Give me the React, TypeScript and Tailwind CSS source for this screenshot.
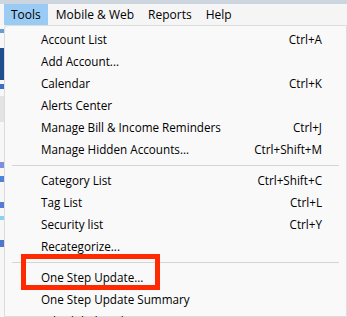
import React from "react";

type Item = { label: string; shortcut?: string } | { sep: true };

const items: Item[] = [
  { label: "Account List", shortcut: "Ctrl+A" },
  { label: "Add Account..." },
  { label: "Calendar", shortcut: "Ctrl+K" },
  { label: "Alerts Center" },
  { label: "Manage Bill & Income Reminders", shortcut: "Ctrl+J" },
  { label: "Manage Hidden Accounts...", shortcut: "Ctrl+Shift+M" },
  { sep: true },
  { label: "Category List", shortcut: "Ctrl+Shift+C" },
  { label: "Tag List", shortcut: "Ctrl+L" },
  { label: "Security list", shortcut: "Ctrl+Y" },
  { label: "Recategorize..." },
  { sep: true },
  { label: "One Step Update..." },
  { label: "One Step Update Summary" },
  { label: "Scheduled Updates..." },
];

export default function App() {
  return (
    <div
      className="w-[347px] h-[317px] overflow-hidden bg-[#f0f0f0] text-black relative"
      style={{ fontFamily: '"Open Sans", "Noto Sans", sans-serif' }}
    >
      <div className="h-[4px] bg-[#cdd6df]" />
      <div className="h-[21px] flex items-center text-[12px] bg-[#f5f5f5]">
        <div className="h-full ml-[4px] px-[7px] bg-[#99cbf4] flex items-center">Tools</div>
        <div className="h-full pl-[8px] pr-[7px] flex items-center">Mobile &amp; Web</div>
        <div className="h-full px-[7px] flex items-center">Reports</div>
        <div className="h-full px-[7px] flex items-center">Help</div>
      </div>
      <div className="flex h-[292px]">
        <div className="w-[4px] flex flex-col bg-[#f7f7f7]">
          <div className="h-[4px]" />
          <div className="h-[4px] bg-[#6a9bd4]" />
          <div className="h-[15px]" />
          <div className="h-[32px] bg-[#1f4f8e]" />
          <div className="h-[4px]" />
          <div className="h-[5px] bg-[#3c6fc4]" />
          <div className="h-[7px]" />
          <div className="h-[26px] bg-[#e3e3e3]" />
          <div className="h-[40px]" />
          <div className="h-[6px] bg-[#7d8fdc]" />
          <div className="h-[8px]" />
          <div className="h-[6px] bg-[#4d84d6]" />
          <div className="h-[20px]" />
          <div className="h-[6px] bg-[#5878d8]" />
          <div className="h-[8px]" />
          <div className="h-[4px] bg-[#8fd0f0]" />
          <div className="h-[20px]" />
          <div className="h-[7px] bg-[#5078c8]" />
        </div>
        <div className="flex-1 bg-[#f9f9f9] border border-[#dcdcdc] rounded-tl-[4px] pt-[3px] text-[11.7px]">
          {items.map((it, i) =>
            "sep" in it ? (
              <div key={i} className="h-[9px] flex items-center pl-[7px] pr-[7px]">
                <div className="h-px w-full bg-[#d4d4d4]" />
              </div>
            ) : (
              <div key={i} className="h-[22px] flex items-center pl-[36px] pr-[24px]">
                <span className="flex-1 whitespace-nowrap">{it.label}</span>
                {it.shortcut && <span className="whitespace-nowrap">{it.shortcut}</span>}
              </div>
            )
          )}
        </div>
      </div>
      <div className="absolute left-[21px] top-[254px] w-[139px] h-[36px] border-[5px] border-[#ff2a00]" />
    </div>
  );
}
